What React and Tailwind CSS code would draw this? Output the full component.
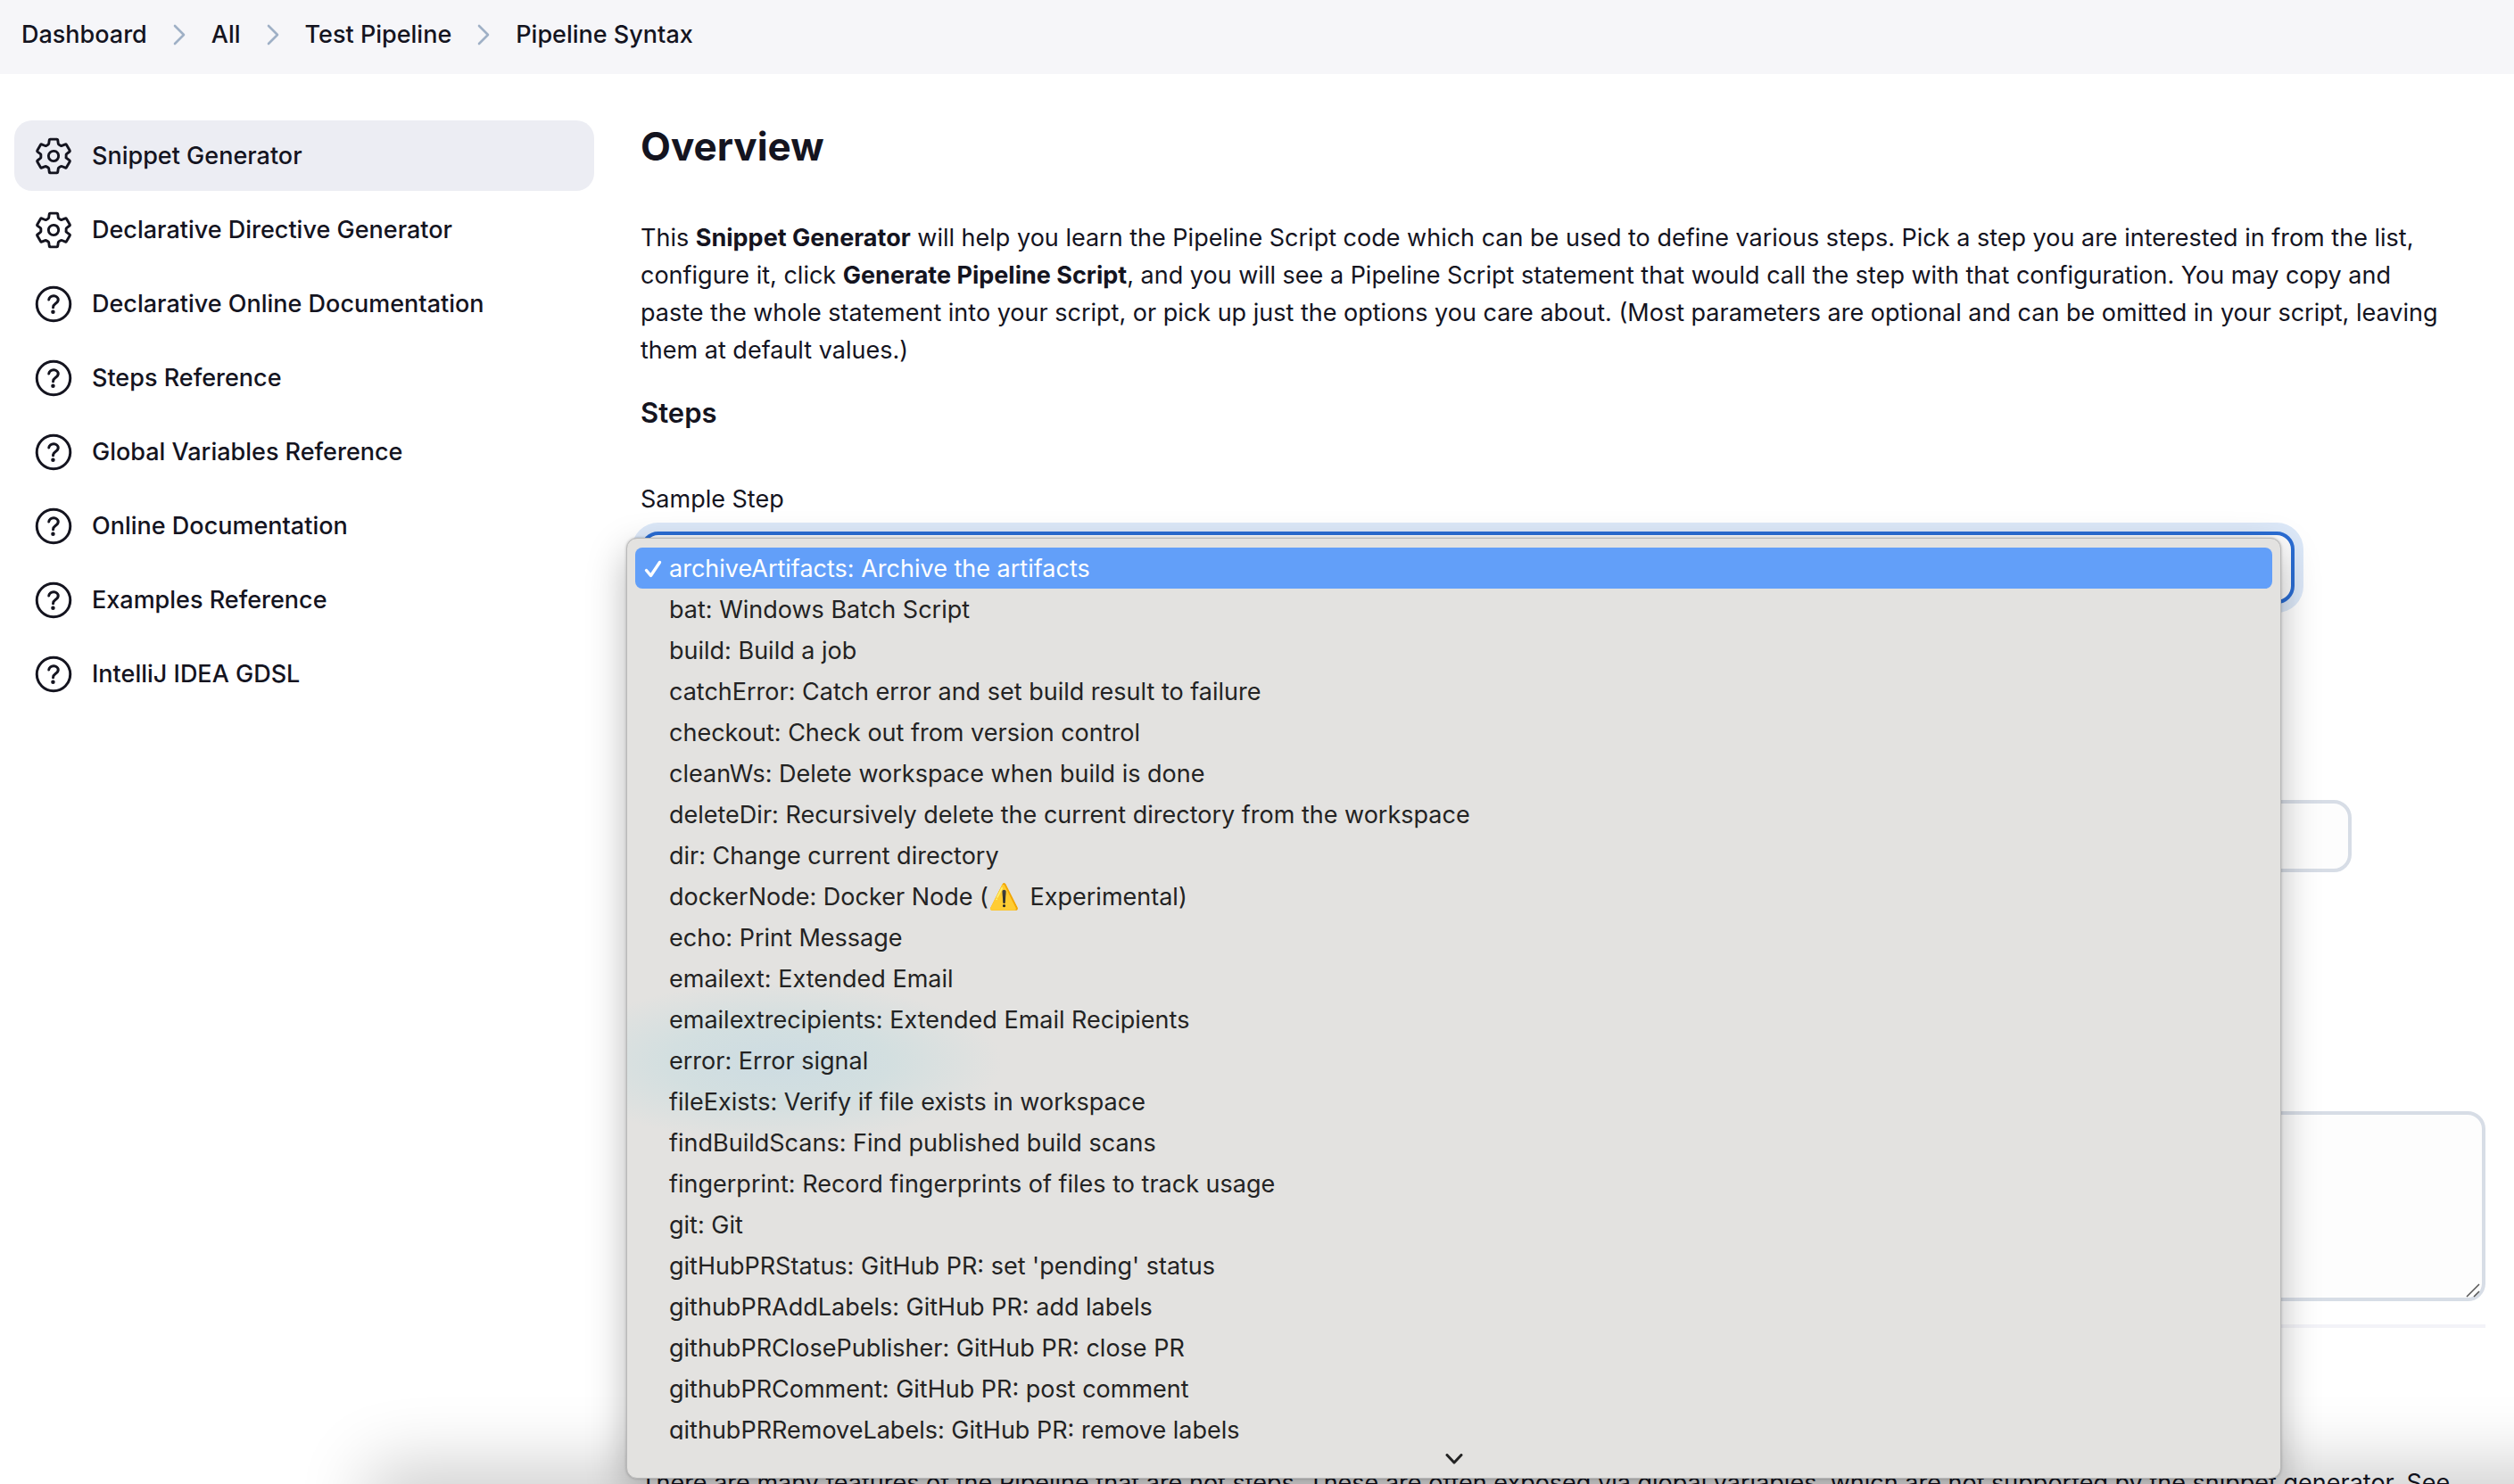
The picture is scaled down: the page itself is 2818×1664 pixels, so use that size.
import { Fragment } from "react";

const crumbs = ["Dashboard", "All", "Test Pipeline", "Pipeline Syntax"];

const tasks = [
  { label: "Snippet Generator", icon: "gear", active: true },
  { label: "Declarative Directive Generator", icon: "gear" },
  { label: "Declarative Online Documentation", icon: "help" },
  { label: "Steps Reference", icon: "help" },
  { label: "Global Variables Reference", icon: "help" },
  { label: "Online Documentation", icon: "help" },
  { label: "Examples Reference", icon: "help" },
  { label: "IntelliJ IDEA GDSL", icon: "help" },
];

const steps = [
  "archiveArtifacts: Archive the artifacts",
  "bat: Windows Batch Script",
  "build: Build a job",
  "catchError: Catch error and set build result to failure",
  "checkout: Check out from version control",
  "cleanWs: Delete workspace when build is done",
  "deleteDir: Recursively delete the current directory from the workspace",
  "dir: Change current directory",
  "dockerNode: Docker Node (⚠️ Experimental)",
  "echo: Print Message",
  "emailext: Extended Email",
  "emailextrecipients: Extended Email Recipients",
  "error: Error signal",
  "fileExists: Verify if file exists in workspace",
  "findBuildScans: Find published build scans",
  "fingerprint: Record fingerprints of files to track usage",
  "git: Git",
  "gitHubPRStatus: GitHub PR: set 'pending' status",
  "githubPRAddLabels: GitHub PR: add labels",
  "githubPRClosePublisher: GitHub PR: close PR",
  "githubPRComment: GitHub PR: post comment",
  "githubPRRemoveLabels: GitHub PR: remove labels",
];

function GearIcon() {
  return (
    <svg viewBox="-16 -16 544 544" className="size-12 shrink-0" fill="none" stroke="currentColor" strokeWidth="33" strokeLinecap="round" strokeLinejoin="round" aria-hidden="true">
      <path d="M262.29 192.31a64 64 0 1 0 57.4 57.4 64.13 64.13 0 0 0-57.4-57.4zM416.39 256a154.34 154.34 0 0 1-1.53 20.79l45.21 35.46a10.81 10.81 0 0 1 2.45 13.75l-42.77 74a10.81 10.81 0 0 1-13.14 4.59l-44.9-18.08a16.11 16.11 0 0 0-15.17 1.75A164.48 164.48 0 0 1 325 400.8a15.94 15.94 0 0 0-8.82 12.14l-6.73 47.89a11.08 11.08 0 0 1-10.68 9.17h-85.54a11.11 11.11 0 0 1-10.69-8.87l-6.72-47.82a16.07 16.07 0 0 0-9-12.22 155.3 155.3 0 0 1-21.46-12.57 16 16 0 0 0-15.11-1.71l-44.89 18.07a10.81 10.81 0 0 1-13.14-4.58l-42.77-74a10.8 10.8 0 0 1 2.45-13.75l38.21-30a16.05 16.05 0 0 0 6-14.08c-.36-4.17-.58-8.33-.58-12.5s.21-8.27.58-12.35a16 16 0 0 0-6.07-13.94l-38.19-30A10.81 10.81 0 0 1 49.48 186l42.77-74a10.81 10.81 0 0 1 13.14-4.59l44.9 18.08a16.11 16.11 0 0 0 15.17-1.75A164.48 164.48 0 0 1 187 111.2a15.94 15.94 0 0 0 8.82-12.14l6.73-47.89A11.08 11.08 0 0 1 213.23 42h85.54a11.11 11.11 0 0 1 10.69 8.87l6.72 47.82a16.07 16.07 0 0 0 9 12.22 155.3 155.3 0 0 1 21.46 12.57 16 16 0 0 0 15.11 1.71l44.89-18.07a10.81 10.81 0 0 1 13.14 4.58l42.77 74a10.8 10.8 0 0 1-2.45 13.75l-38.21 30a16.05 16.05 0 0 0-6.05 14.08c.33 4.14.55 8.3.55 12.47z" />
    </svg>
  );
}

function HelpIcon() {
  return (
    <svg viewBox="0 0 512 512" className="size-12 shrink-0" fill="none" stroke="currentColor" aria-hidden="true">
      <circle cx="256" cy="256" r="200" strokeWidth="32" />
      <path d="M200 202.29s.84-17.5 19.57-32.57C230.68 160.77 244 158.18 256 158c10.93-.14 20.69 1.67 26.53 4.45 10 4.76 29.47 16.38 29.47 41.09 0 26-17 37.81-36.37 50.8S251 281.43 251 296" strokeWidth="32" strokeLinecap="round" />
      <circle cx="250" cy="348" r="24" fill="currentColor" stroke="none" />
    </svg>
  );
}

function CrumbChevron() {
  return (
    <svg viewBox="0 0 16 24" className="h-6 w-4" fill="none" stroke="#9fb0c6" strokeWidth="2.6" strokeLinecap="round" strokeLinejoin="round" aria-hidden="true">
      <path d="M3 2l10 10L3 22" />
    </svg>
  );
}

function StepLabel({ text }) {
  const [before, after] = text.split("⚠️");
  if (after === undefined) return <span>{text}</span>;
  return (
    <span>
      {before}
      <span className="mr-1 text-[28px] leading-none">⚠️</span>
      {after}
    </span>
  );
}

function StepMenu() {
  return (
    <div className="absolute -left-4 right-[15px] top-[7px] z-10 overflow-hidden rounded-xl border border-[#b9b9b9] bg-[#e3e2e0] bg-[radial-gradient(ellipse_250px_90px_at_170px_587px,#cddce2_0%,#d3dfe0_50%,#e3e2e0_100%)] px-[9px] pt-[10px] shadow-[0_0_3px_rgba(0,0,0,0.25),0_16px_44px_rgba(0,0,0,0.28)]">
      <div role="listbox" aria-label="Sample Step" className="h-[1000px] overflow-hidden text-[#232323]">
        {steps.map((step, i) => (
          <div
            key={step}
            role="option"
            aria-selected={i === 0}
            className={
              i === 0
                ? "relative flex h-[46px] items-center rounded-lg bg-[#629ff9] pl-[38px] pt-0.5 text-white"
                : "flex h-[46px] items-center pl-[38px] pt-0.5"
            }
          >
            {i === 0 && (
              <svg viewBox="0 0 20 20" className="absolute left-2.5 size-5" fill="none" stroke="currentColor" strokeWidth="3.4" strokeLinecap="round" strokeLinejoin="round" aria-hidden="true">
                <path d="M2.5 11.5l5 6L17.5 2.5" />
              </svg>
            )}
            <StepLabel text={step} />
          </div>
        ))}
      </div>
      <div className="flex h-[43px] items-center justify-center">
        <svg viewBox="0 0 20 12" className="h-3 w-5" fill="none" stroke="#232323" strokeWidth="3" strokeLinecap="round" strokeLinejoin="round" aria-hidden="true">
          <path d="M2 1.5l8 8.5 8-8.5" />
        </svg>
      </div>
    </div>
  );
}

export default function App() {
  return (
    <div className="relative flex h-screen flex-col overflow-hidden bg-white font-['Inter',sans-serif] text-[27px] leading-[42px] text-[#14141f]">
      <nav aria-label="Breadcrumb" className="flex h-[83px] shrink-0 items-start bg-[#f6f6f9] px-6 pt-[18px] font-medium">
        {crumbs.map((crumb, i) => (
          <Fragment key={crumb}>
            {i > 0 && (
              <span className="flex h-[42px] w-[72px] items-center justify-center">
                <CrumbChevron />
              </span>
            )}
            <a href="#">{crumb}</a>
          </Fragment>
        ))}
      </nav>

      <div className="flex flex-1 pl-4 pr-8 pt-[52px]">
        <aside className="mr-[52px] flex w-[650px] shrink-0 flex-col gap-1">
          {tasks.map((task) => (
            <a
              key={task.label}
              href="#"
              className={
                task.active
                  ? "flex h-[79px] items-center gap-[19px] rounded-[20px] bg-[#ecedf3] pl-5 pt-px font-medium"
                  : "flex h-[79px] items-center gap-[19px] rounded-[20px] pl-5 pt-px font-medium"
              }
            >
              {task.icon === "gear" ? <GearIcon /> : <HelpIcon />}
              {task.label}
            </a>
          ))}
        </aside>

        <main className="min-w-0 flex-1">
          <h1 className="text-[44px] font-bold leading-[58px]">Overview</h1>
          <p className="mt-[53px] pr-10">
            This <strong>Snippet Generator</strong> will help you learn the Pipeline Script code which can be used to define various steps. Pick a step you are interested in from the list, configure it, click <strong>Generate Pipeline Script</strong>, and you will see a Pipeline Script statement that would call the step with that configuration. You may copy and paste the whole statement into your script, or pick up just the options you care about. (Most parameters are optional and can be omitted in your script, leaving them at default values.)
          </p>
          <h2 className="mt-7 text-[31px] font-semibold leading-[42px]">Steps</h2>
          <label htmlFor="sample-step" className="mt-[55px] block">Sample Step</label>
          <div className="relative mr-[214px] mt-[15px]">
            <select id="sample-step" className="block h-[81px] w-full appearance-none rounded-[20px] border-4 border-[#2a6dd4] bg-[#fcfcfc] text-transparent outline-none ring-[10px] ring-[#dce8f8]">
              <option>{steps[0]}</option>
            </select>
            <StepMenu />
          </div>
          <input aria-label="Files to archive" className="mt-[220px] block h-[81px] w-[calc(100%-150px)] rounded-[20px] border-4 border-[#d7dde6] bg-[#fdfdfd]" />
          <div className="relative mt-[268px]">
            <textarea aria-label="Generated script" className="block h-[213px] w-full resize-none rounded-[20px] border-4 border-[#d7dde6] bg-[#fdfdfd]" />
            <svg viewBox="0 0 16 16" className="absolute bottom-1 right-1.5 size-4" fill="none" stroke="#555" strokeWidth="1.5" aria-hidden="true">
              <path d="M1 15L15 1M9 15l6-6" />
            </svg>
          </div>
          <hr className="mt-[26px] border-t-4 border-[#f3f3f8]" />
          <p className="mt-[153px] whitespace-nowrap">
            There are many features of the Pipeline that are not steps. These are often exposed via global variables, which are not supported by the snippet generator. See
          </p>
        </main>
      </div>

      <div className="pointer-events-none absolute -bottom-20 -right-60 left-[430px] h-16 shadow-[0_-20px_80px_16px_rgba(0,0,0,0.2)]" />
    </div>
  );
}
